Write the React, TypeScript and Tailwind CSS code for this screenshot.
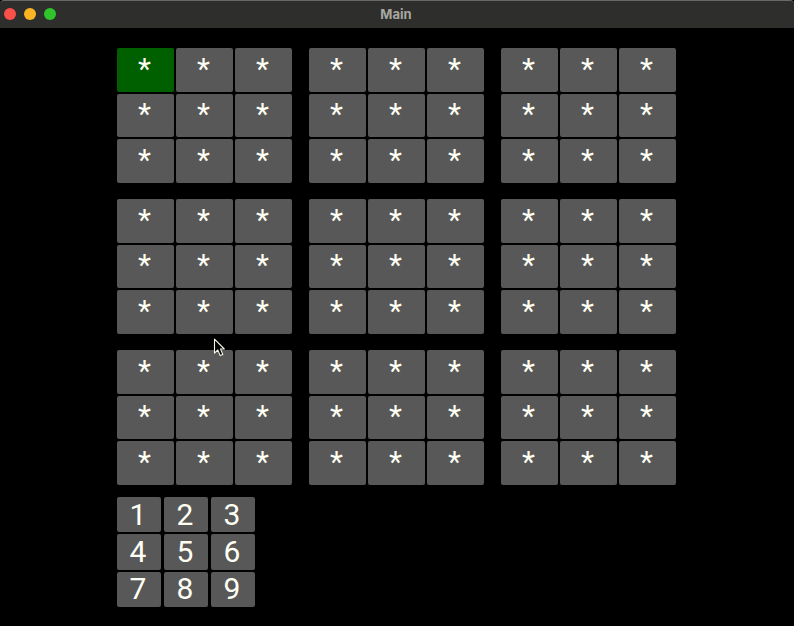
const blocks = Array.from({ length: 9 }, (_, i) => i);
const cells = Array.from({ length: 9 }, (_, i) => i);
const digits = [1, 2, 3, 4, 5, 6, 7, 8, 9];

function TitleBar() {
  return (
    <header className="grid h-7 grid-cols-[1fr_auto_1fr] items-center rounded-t-sm border-t border-[#686868] bg-[#2e2e2c] px-1 pb-[2px]">
      <div className="flex gap-2">
        <button type="button" aria-label="Close" className="size-3 rounded-full bg-[#fb5048]" />
        <button type="button" aria-label="Minimize" className="size-3 rounded-full bg-[#fcb424]" />
        <button type="button" aria-label="Zoom" className="size-3 rounded-full bg-[#30c42c]" />
      </div>
      <h1 className="pr-[2px] font-['Inter',sans-serif] text-[13px] leading-4 font-bold text-[#a8a8a0]">Main</h1>
    </header>
  );
}

function Block({ index }: { index: number }) {
  return (
    <div className="grid h-[135px] grid-cols-[repeat(3,57px)] grid-rows-3 gap-[2px]">
      {cells.map((cell) => (
        <button
          key={cell}
          type="button"
          className={`flex items-center justify-center rounded-[2px] pr-[1px] pb-[2px] ${
            index === 0 && cell === 0 ? "bg-[#006000]" : "bg-[#585858]"
          }`}
        >
          *
        </button>
      ))}
    </div>
  );
}

function Pointer() {
  return (
    <svg className="pointer-events-none absolute top-[338px] left-[213px]" width="13" height="20" viewBox="0 0 13 20" aria-hidden="true">
      <path
        d="M1.5 1.2V15.2L4.8 12L7.2 17.6L9.8 16.5L7.5 11H11.3Z"
        fill="#000"
        stroke="#f4f4e8"
        strokeWidth="1.1"
        strokeLinejoin="round"
      />
    </svg>
  );
}

export default function App() {
  return (
    <div className="relative min-h-screen bg-black">
      <TitleBar />
      <main className="mx-auto w-fit pt-5 pr-[2px] pb-5 font-['Roboto',sans-serif] text-[30px] leading-9 text-[#fffff4]">
        <div className="grid grid-cols-[repeat(3,auto)] gap-x-[17px] gap-y-4">
          {blocks.map((block) => (
            <Block key={block} index={block} />
          ))}
        </div>
        <div className="mt-3 grid h-[110px] w-fit grid-cols-[repeat(3,44px)] grid-rows-3 gap-x-[3px] gap-y-[2px]">
          {digits.map((digit) => (
            <button key={digit} type="button" className="flex items-center justify-center rounded-[2px] bg-[#585858] pr-[1px]">
              {digit}
            </button>
          ))}
        </div>
      </main>
      <Pointer />
    </div>
  );
}
